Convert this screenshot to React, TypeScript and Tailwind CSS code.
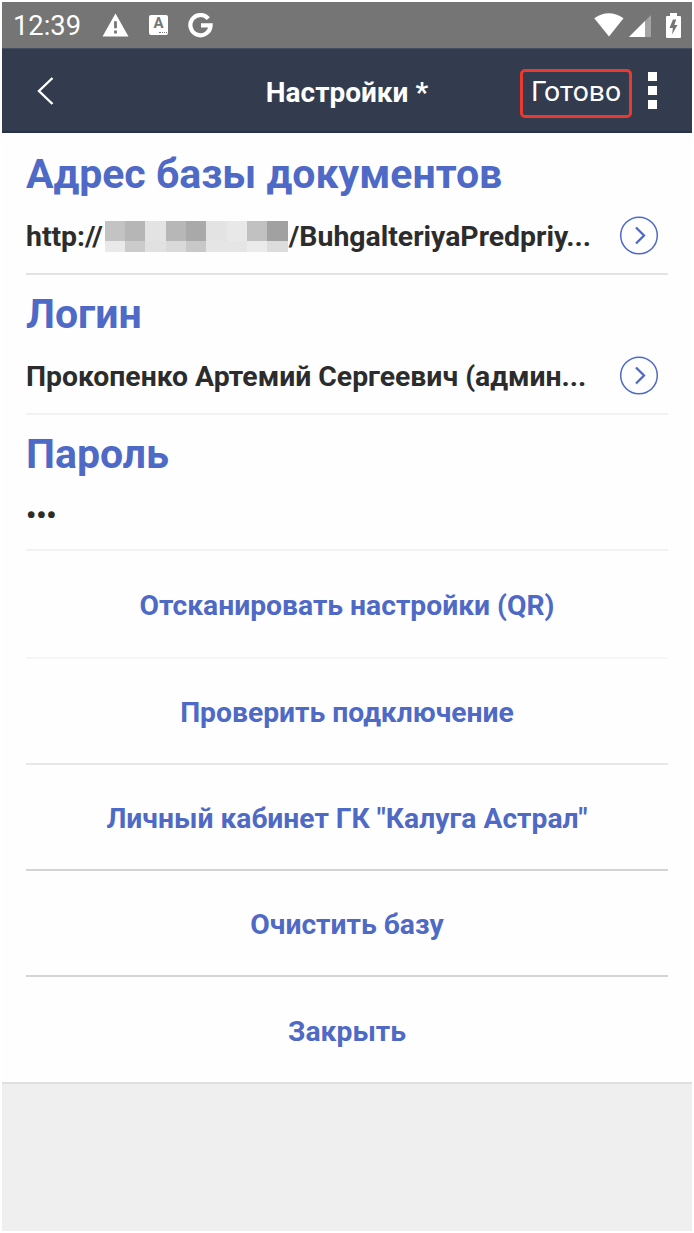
import clsx from "clsx";

const MASK_TOP = ["bg-[#c3c3c3]", "bg-[#b6b6b6]", "bg-[#e3e3e3]", "bg-[#b7b7b7]", "bg-[#a9a9a9]", "bg-[#e3e3e3]", "bg-[#e8e8e8]", "bg-[#c1c1c1]", "bg-[#a1a1a1]"];
const MASK_BOTTOM = ["bg-[#e9e9e9]", "bg-[#cbcbcb]", "bg-[#e1e1e1]", "bg-[#d9d9d9]", "bg-[#c8c8c8]", "bg-[#e5e5e5]", "bg-[#e5e5e5]", "bg-[#ebebeb]", "bg-[#dcdcdc]"];

const ACTIONS = [
  { id: "scan", label: "Отсканировать настройки (QR)", row: "h-[108px] border-b-2 border-[#f6f6f6]" },
  { id: "check", label: "Проверить подключение", row: "h-[106px] border-b-2 border-[#e8e8e8]" },
  { id: "cabinet", label: 'Личный кабинет ГК "Калуга Астрал"', row: "h-[106px] border-b-2 border-[#d4d4d4]" },
  { id: "clear", label: "Очистить базу", row: "h-[106px] border-b-2 border-[#d4d4d4]" },
  { id: "close", label: "Закрыть", row: "h-[105px]" },
];

const StatusBar = () => (
  <div className="flex h-[46px] items-center bg-[#757575] pl-[11px] pr-[9px] text-white">
    <span className="w-[70px] pt-[2px] text-[27.300px] leading-[44px] whitespace-nowrap">12:39</span>
    <svg className="ml-[19px]" width="27" height="24" viewBox="0 0 27 24">
      <path d="M13.5 0.5L26.5 23.5H0.5Z" fill="#fff" />
      <path d="M13.5 8.2v7M13.5 17.5v3" stroke="#757575" strokeWidth="2.8" />
    </svg>
    <div className="ml-[20px] flex h-[20px] w-[19px] flex-col items-center rounded-[2px] bg-white text-[#757575]">
      <span className="text-[15px] leading-[17px] font-bold">A</span>
      <i className="ml-[8px] w-[8px] border-t border-dotted border-[#757575]" />
    </div>
    <svg className="ml-[20px]" width="25" height="25" viewBox="0 0 25 25" fill="none">
      <path d="M20.3 5.7A10.1 10.1 0 1 0 22.6 12.4H13" stroke="#fff" strokeWidth="4.2" />
    </svg>
    <svg className="ml-auto" width="30" height="24" viewBox="0 0 30 24">
      <path d="M0.3 5.2Q14.8-4.8 29.5 5.2L15 23.5Z" fill="#fff" />
    </svg>
    <svg className="mt-[2px] ml-[5px]" width="22" height="22" viewBox="0 0 22 22">
      <path d="M22 0V22H0Z" fill="#a3a3a3" />
      <path d="M16 6V22H0Z" fill="#fff" />
    </svg>
    <svg className="mr-[2px] ml-[15px]" width="15" height="25" viewBox="0 0 15 25">
      <path d="M4 0h7v3h3q1 0 1 1v20q0 1-1 1H1q-1 0-1-1V4q0-1 1-1h3z" fill="#fff" />
      <path d="M7 6.5L3.5 15h3.4L6 21.5 11.5 12H8.3l1.9-5.500z" fill="#757575" />
    </svg>
  </div>
);

const Header = () => (
  <header className="flex h-[85px] items-center border-t border-b-2 border-t-[#445062] border-b-[#28324a] bg-[#323c4e] text-white">
    <button type="button" className="w-[210px] pt-px pl-[34px]">
      <svg width="20" height="30" viewBox="0 0 20 30" fill="none">
        <path d="M16.500 2L3 15l13.500 13" stroke="#fff" strokeWidth="2.400" />
      </svg>
    </button>
    <h1 className="w-[270px] pt-[5px] text-center text-[28px] leading-[34px] font-bold whitespace-nowrap">
      Настройки *
    </h1>
    <button
      type="button"
      className="mt-[7px] ml-[38px] h-[49px] w-[112px] rounded-[5px] border-[3px] border-[#e93a2f] pb-[3px] text-[28.200px] leading-[38px] whitespace-nowrap"
    >
      Готово
    </button>
    <div className="ml-[16px] flex flex-col gap-[5px] pt-px">
      <i className="h-[9px] w-[9px] bg-white" />
      <i className="h-[9px] w-[9px] bg-white" />
      <i className="h-[9px] w-[9px] bg-white" />
    </div>
  </header>
);

const OpenButton = () => (
  <button type="button" className="mr-[9px] ml-auto block">
    <svg width="40" height="40" viewBox="0 0 40 40" fill="none" stroke="#4f69c6">
      <circle cx="20" cy="19.500" r="18.300" strokeWidth="1.500" />
      <path d="M17 11.500l8 8-8 8" strokeWidth="2.300" />
    </svg>
  </button>
);

const Title = ({ children }: { children: string }) => (
  <h2 className="text-[41px] leading-[48px] font-bold whitespace-nowrap text-[#4f69c6]">{children}</h2>
);

const Mask = () => (
  <span className="mr-px ml-[2px] inline-grid w-[183px] grid-cols-9 grid-rows-[20px_11px]">
    {[...MASK_TOP, ...MASK_BOTTOM].map((tone, index) => (
      <i key={index} className={tone} />
    ))}
  </span>
);

export default function App() {
  return (
    <div className="h-[1233px] w-[694px] bg-white p-[2px] font-['Roboto',sans-serif]">
      <StatusBar />
      <Header />

      <main className="bg-[#fefefe] px-[24px]">
        <section className="h-[142px] border-b-2 border-[#e3e3e3] pt-[17px]">
          <Title>Адрес базы документов</Title>
          <div className="mt-[18px] flex h-[40px] items-center text-[28.400px] font-bold whitespace-nowrap text-[#2c2c2c]">
            <span className="pt-[2px]">http://</span>
            <Mask />
            <span className="pt-[2px]">/BuhgalteriyaPredpriy...</span>
            <OpenButton />
          </div>
        </section>

        <section className="h-[140px] border-b-2 border-[#f2f2f2] pt-[15px]">
          <Title>Логин</Title>
          <div className="mt-[18px] flex h-[40px] items-center text-[28.350px] font-bold whitespace-nowrap text-[#2c2c2c]">
            <span className="pt-[2px]">Прокопенко Артемий Сергеевич (админ...</span>
            <OpenButton />
          </div>
        </section>

        <section className="h-[136px] border-b-2 border-[#f2f2f2] pt-[15px]">
          <Title>Пароль</Title>
          <div className="mt-[18px] text-[28.350px] leading-[40px] font-bold text-[#2c2c2c]">•••</div>
        </section>

        {ACTIONS.map((action) => (
          <button
            key={action.id}
            type="button"
            className={clsx(
              "block w-full pt-[4px] text-center text-[28.250px] leading-[34px] font-bold whitespace-nowrap text-[#4f69c6]",
              action.row,
            )}
          >
            {action.label}
          </button>
        ))}
      </main>

      <footer className="h-[149px] border-t-2 border-[#dfdfdf] bg-[#efefef]" />
    </div>
  );
}
